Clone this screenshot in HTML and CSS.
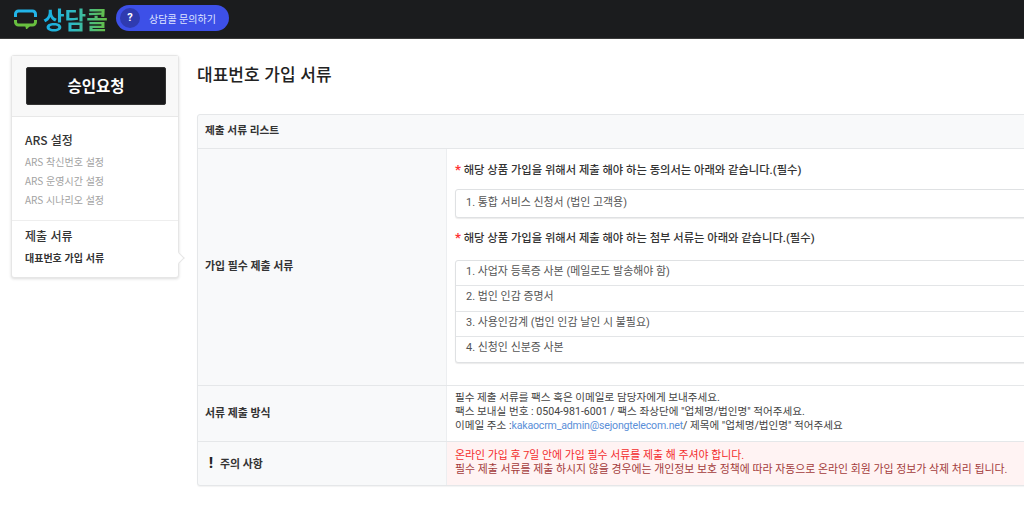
FILE: index.html
```html
<!DOCTYPE html>
<html lang="ko">
<head>
<meta charset="utf-8">
<title>대표번호 가입 서류</title>
<link rel="stylesheet" href="styles.css">
</head>
<body>
<header class="topbar">
  <div class="logo">
    <svg class="logo-icon" width="23" height="20" viewBox="0 0 23 20">
      <path d="M1.500 8V5a3 3 0 0 1 3-3H18.500a3 3 0 0 1 3 3V8" fill="none" stroke="#22b4e8" stroke-width="3"/>
      <path d="M1.500 11V13a3 3 0 0 0 3 3H18.500a3 3 0 0 0 3-3V11" fill="none" stroke="#68bf3f" stroke-width="3"/>
      <path d="M11 16H17L13 20H12Z" fill="#68bf3f"/>
    </svg>
    <span class="logo-text">상담콜</span>
  </div>
  <a class="help-pill"><span class="help-mark">?</span><span class="help-text">상담콜 문의하기</span></a>
</header>
<div class="layout">
  <aside class="sidebar">
    <div class="side-top"><button class="approve">승인요청</button></div>
    <section class="side-group first">
      <h3>ARS 설정</h3>
      <ul>
        <li>ARS 착신번호 설정</li>
        <li>ARS 운영시간 설정</li>
        <li>ARS 시나리오 설정</li>
      </ul>
    </section>
    <section class="side-group second">
      <h3>제출 서류</h3>
      <p class="side-active">대표번호 가입 서류</p>
    </section>
    <span class="side-arrow"></span>
  </aside>
  <main class="content">
    <h1>대표번호 가입 서류</h1>
    <div class="panel">
      <div class="panel-head">제출 서류 리스트</div>
      <div class="row row-docs">
        <div class="label">가입 필수 제출 서류</div>
        <div class="cell docs">
          <p class="req"><span class="star">*</span> 해당 상품 가입을 위해서 제출 해야 하는 동의서는 아래와 같습니다.(필수)</p>
          <ul class="list list-single">
            <li>1. 통합 서비스 신청서 (법인 고객용)</li>
          </ul>
          <p class="req"><span class="star">*</span> 해당 상품 가입을 위해서 제출 해야 하는 첨부 서류는 아래와 같습니다.(필수)</p>
          <ul class="list">
            <li>1. 사업자 등록증 사본 (메일로도 발송해야 함)</li>
            <li>2. 법인 인감 증명서</li>
            <li>3. 사용인감계 (법인 인감 날인 시 불필요)</li>
            <li>4. 신청인 신분증 사본</li>
          </ul>
        </div>
      </div>
      <div class="row row-method">
        <div class="label">서류 제출 방식</div>
        <div class="cell text">
          필수 제출 서류를 팩스 혹은 이메일로 담당자에게 보내주세요.<br>
          팩스 보내실 번호 : 0504-981-6001 / 팩스 좌상단에 "업체명/법인명" 적어주세요.<br>
          이메일 주소 :<a class="mail">kakaocrm_admin@sejongtelecom.net</a>/ 제목에 "업체명/법인명" 적어주세요
        </div>
      </div>
      <div class="row row-warn">
        <div class="label warn-label"><span class="bang">!</span>주의 사항</div>
        <div class="cell text warn">
          <span class="warn-strong">온라인 가입 후 7일 안에 가입 필수 서류를 제출 해 주셔야 합니다.</span><br>
          필수 제출 서류를 제출 하시지 않을 경우에는 개인정보 보호 정책에 따라 자동으로 온라인 회원 가입 정보가 삭제 처리 됩니다.
        </div>
      </div>
    </div>
  </main>
</div>
</body>
</html>
```
FILE: styles.css
```css
* { box-sizing: border-box; }
html, body { margin: 0; padding: 0; height: 100%; overflow: hidden; }
body {
  width: 1024px;
  background: #fff;
  color: #333;
  font-family: Roboto, "Noto Sans CJK KR", "Noto Sans", sans-serif;
  font-size: 10.700px;
}
h1, h3, p, ul { margin: 0; padding: 0; }
ul { list-style: none; }

.topbar {
  height: 39px;
  background: #1b1c1e;
  border-bottom: 1px solid #3a3a3a;
  display: flex;
  align-items: center;
  padding-left: 14px;
}
.logo { display: flex; align-items: center; gap: 6px; width: 102px; flex: none; white-space: nowrap; }
.logo-text {
  font-family: "Noto Sans CJK KR", sans-serif;
  font-size: 23.500px;
  font-weight: 700;
  line-height: 26px;
  letter-spacing: 0;
  background: linear-gradient(90deg, #16afe8 0%, #2db9c4 45%, #68bf3f 100%);
  -webkit-background-clip: text;
  background-clip: text;
  color: transparent;
}
.help-pill {
  display: flex;
  align-items: center;
  width: 113px;
  height: 26px;
  flex: none;
  border-radius: 13px;
  background: #3d50e8;
  padding-left: 4px;
  margin-top: -2px;
}
.help-mark {
  width: 20px;
  height: 20px;
  border-radius: 50%;
  background: #2f3bb0;
  color: #fff;
  font-weight: 700;
  font-size: 11px;
  line-height: 20px;
  text-align: center;
}
.help-text { color: #dfe3ff; font-size: 10px; margin-left: 9px; white-space: nowrap; }

.layout { display: flex; align-items: flex-start; padding: 16px 0 0 11px; }

.sidebar {
  position: relative;
  width: 168px;
  height: 223px;
  flex: none;
  background: #fff;
  border: 1px solid #e6e6e6;
  border-radius: 3px;
  box-shadow: 0 1px 3px rgba(0,0,0,.14);
}
.side-top {
  height: 61px;
  background: #f8f8f8;
  border-bottom: 1px solid #e8e8e8;
  padding: 11px 13px 0 14px;
}
.approve {
  display: block;
  width: 140px;
  height: 38px;
  background: #18181a;
  color: #fff;
  border: 1px solid #333;
  border-radius: 2px;
  font: 700 15.500px/20px "Noto Sans CJK KR", sans-serif;
  padding: 0 0 3px;
}
.side-group { padding-left: 13px; }
.side-group.first { height: 104px; padding-top: 14px; border-bottom: 1px solid #eee; }
.side-group.second { padding-top: 6px; }
.side-group h3 { font-family: "Noto Sans CJK KR", sans-serif; font-size: 12px; line-height: 18px; font-weight: 500; color: #333; }
.side-group li { font-family: "Noto Sans CJK KR", sans-serif; font-size: 10px; line-height: 19.200px; color: #a2a2a2; }
.side-group.first ul { margin-top: 3px; }
.side-active { font-family: "Noto Sans CJK KR", sans-serif; font-size: 10px; font-weight: 700; line-height: 16px; color: #333; margin-top: 5px; }
.side-arrow {
  position: absolute;
  right: -5px;
  top: 198px;
  width: 8px;
  height: 8px;
  background: #fff;
  border-top: 1px solid #e6e6e6;
  border-right: 1px solid #e6e6e6;
  transform: rotate(45deg);
}

.content { margin-left: 18px; width: 900px; flex: none; }
h1 { font-family: "Noto Sans CJK KR", sans-serif; font-size: 17px; font-weight: 500; line-height: 24px; color: #222; margin-top: 7px; margin-bottom: 28px; }

.panel {
  border: 1px solid #e5e7e9;
  border-radius: 3px;
  background: #f8f9fa;
  box-shadow: 0 1px 1px rgba(0,0,0,.05);
}
.panel-head {
  height: 34px;
  line-height: 32px;
  padding-left: 7px;
  font-weight: 700;
  color: #333;
  border-bottom: 1px solid #e5e7e9;
}
.row { display: flex; border-bottom: 1px solid #e5e7e9; }
.row:last-child { border-bottom: 0; }
.row-docs { height: 237px; }
.row-method { height: 56px; }
.row-warn { height: 43px; }
.label {
  width: 248px;
  flex: none;
  padding-left: 7px;
  padding-bottom: 2px;
  display: flex;
  align-items: center;
  font-size: 10.900px;
  font-weight: 700;
  color: #333;
}
.row-docs .label { padding-bottom: 4px; }
.row-method .label { padding-bottom: 3px; }
.bang { font-size: 14px; font-weight: 900; width: 11px; margin-left: 4px; color: #222; }
.cell { flex: 1; background: #fff; border-left: 1px solid #eceef0; padding-left: 8px; }
.docs { padding-top: 13px; }
.req { font-size: 11.300px; font-weight: 500; line-height: 16px; color: #333; }
.star { color: #f33; font-weight: 700; font-size: 13px; }
.list {
  width: 700px;
  margin: 13px 0 0;
  background: #fff;
  border: 1px solid #dfe1e3;
  border-radius: 3px;
  box-shadow: 0 1px 1px rgba(0,0,0,.08);
}
.list-single { margin: 10px 0 12px; }
.list li {
  height: 25.300px;
  line-height: 22px;
  padding-left: 10px;
  font-size: 10.950px;
  color: #555;
  border-bottom: 1px solid #e3e5e7;
}
.list-single li { height: 27px; line-height: 25px; }
.list li:last-child { border-bottom: 0; }
.text { display: block; font-size: 10.600px; line-height: 14px; color: #444; padding-top: 5px; white-space: nowrap; }
.mail { color: #5b8fd8; letter-spacing: -0.2px; }
.warn { font-size: 10.900px; background: #fff3f3; color: #a33b3b; padding-top: 7px; }
.warn-strong { color: #f32c2c; }
```
